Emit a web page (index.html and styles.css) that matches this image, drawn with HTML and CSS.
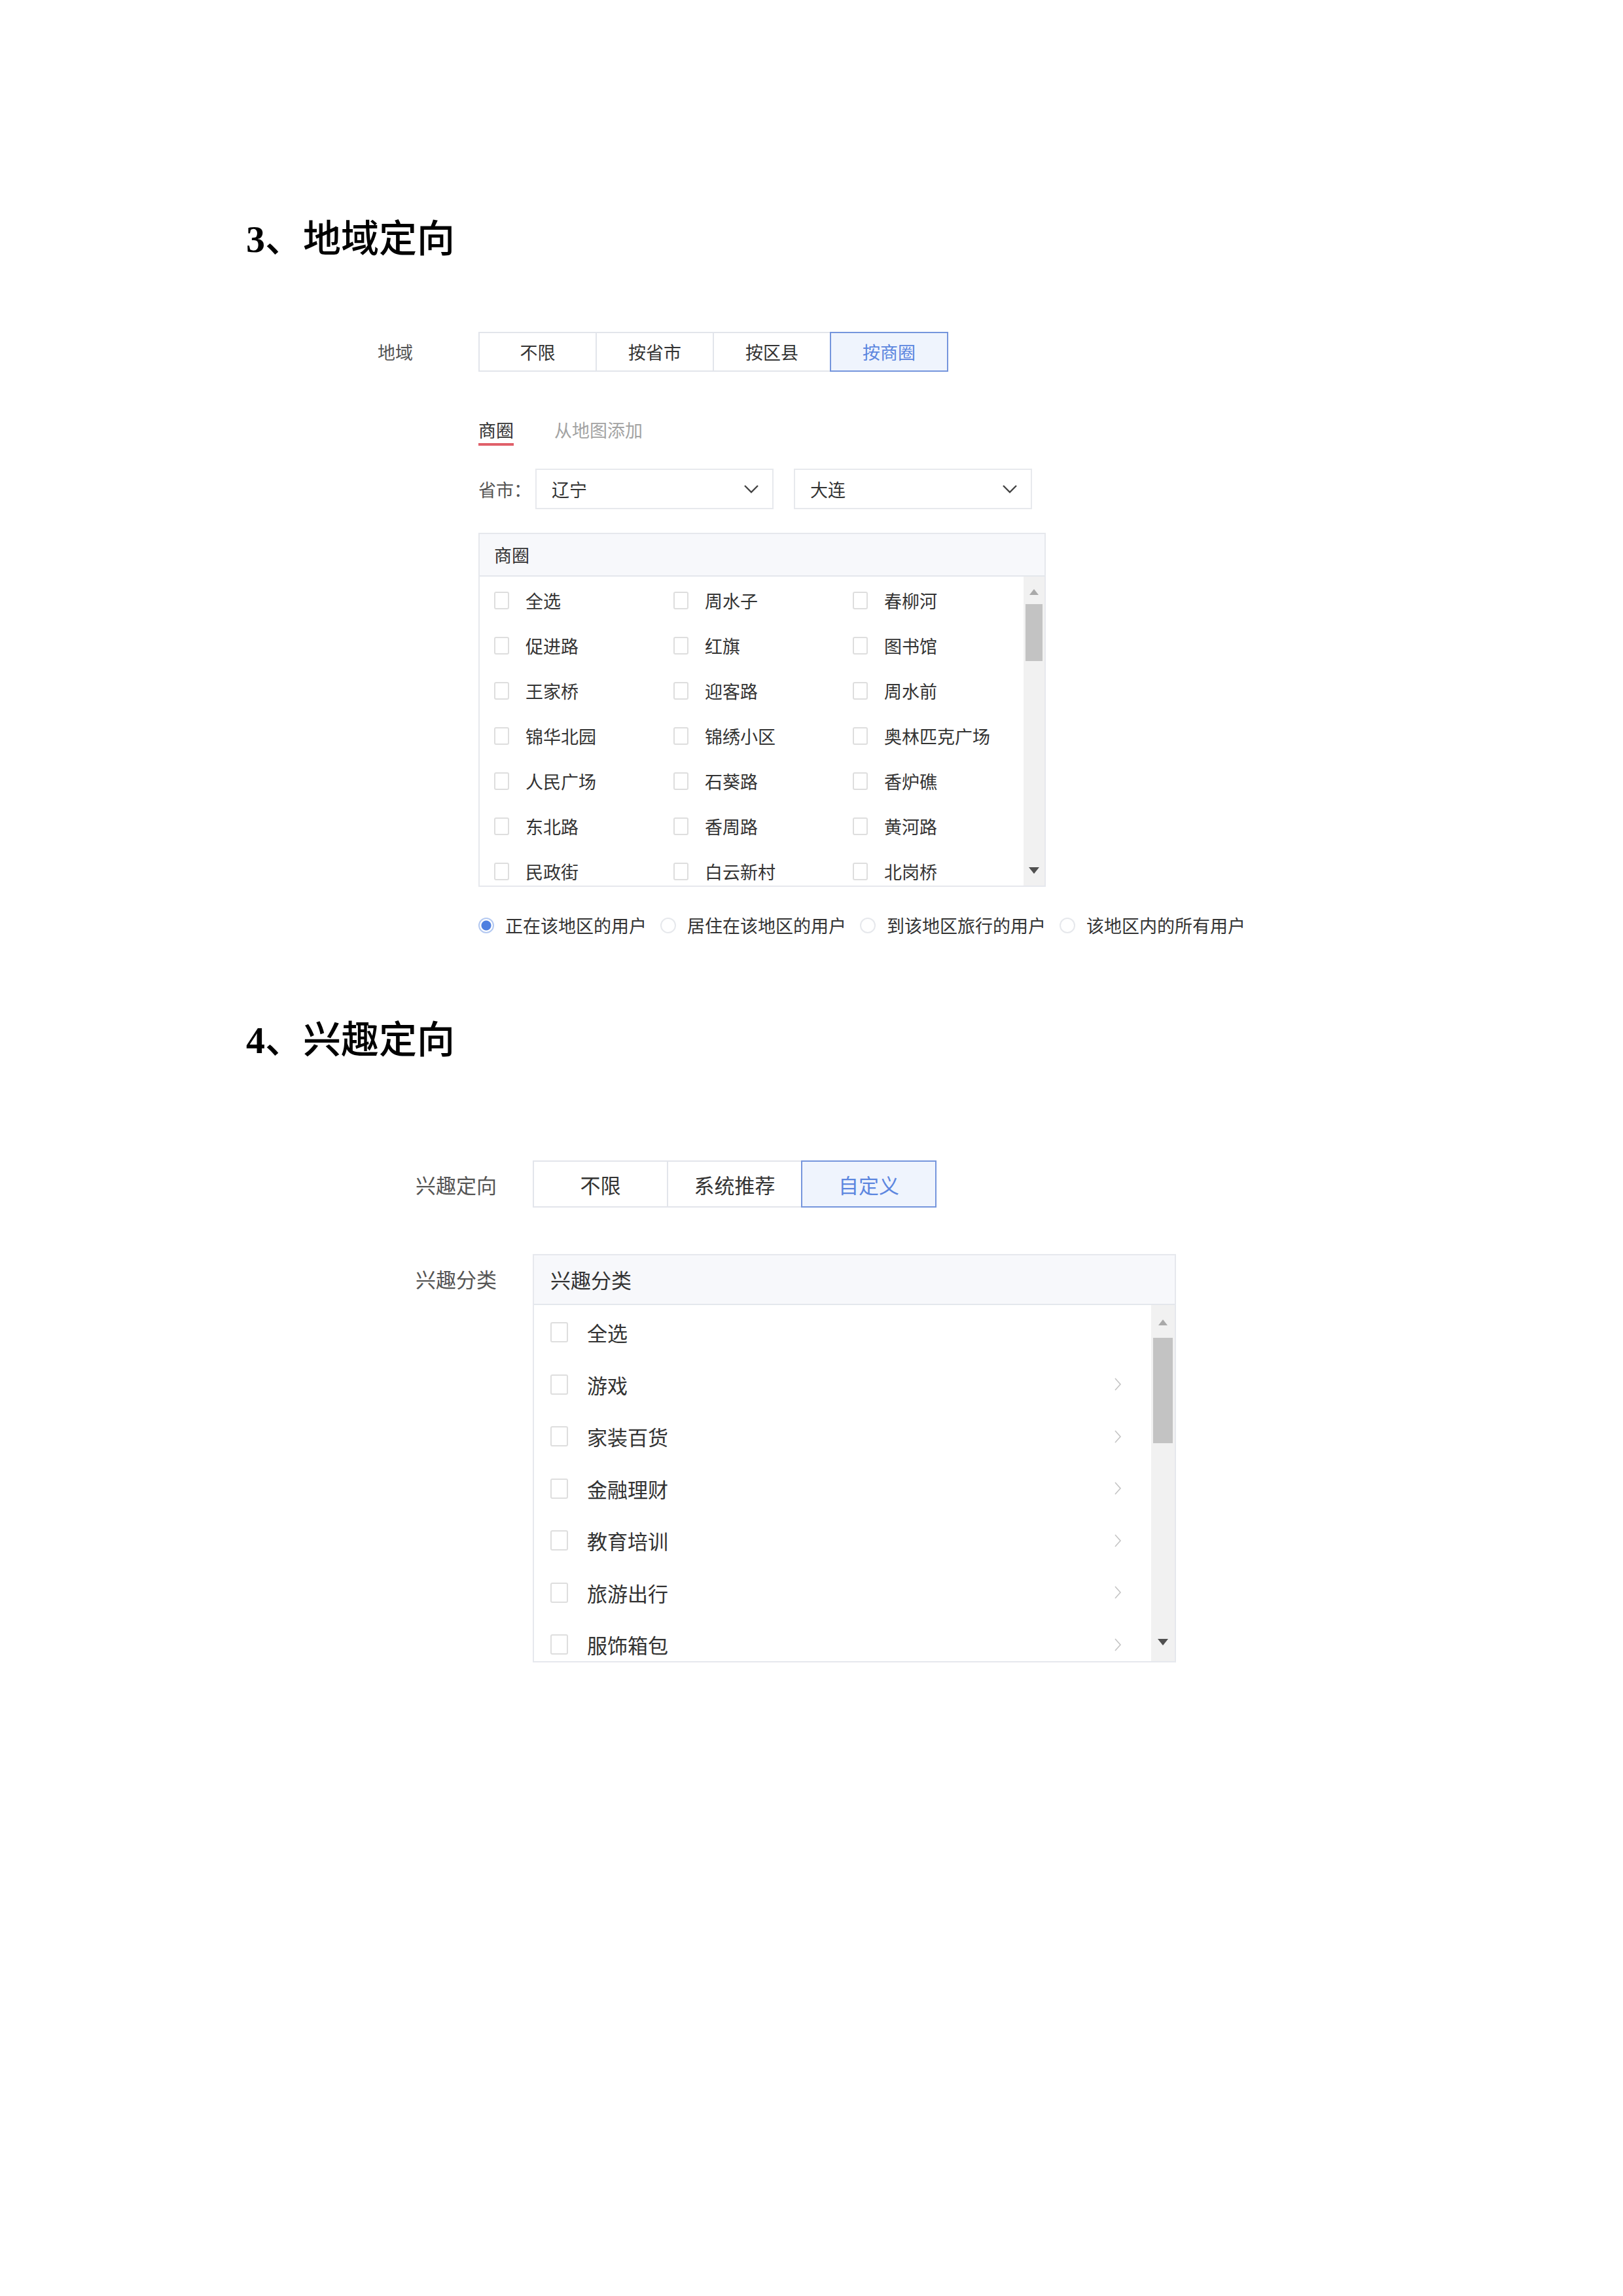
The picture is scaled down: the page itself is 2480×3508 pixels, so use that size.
FILE: index.html
```html
<!DOCTYPE html>
<html lang="zh-CN">
<head>
<meta charset="utf-8">
<title>定向设置</title>
<link rel="stylesheet" href="styles.css">
</head>
<body>
<main class="page">

  <h2 class="sec-title"><span class="num">3</span>、地域定向</h2>

  <section class="form geo">
    <div class="row">
      <div class="row-label">地域</div>
      <div class="segmented">
        <button class="seg">不限</button>
        <button class="seg">按省市</button>
        <button class="seg">按区县</button>
        <button class="seg active">按商圈</button>
      </div>
    </div>

    <div class="row tabs-row">
      <div class="row-label"></div>
      <div class="tabs">
        <span class="tab active">商圈</span>
        <span class="tab">从地图添加</span>
      </div>
    </div>

    <div class="row region-row">
      <div class="row-label"></div>
      <span class="region-label">省市：</span>
      <div class="select">
        <span>辽宁</span>
        <svg class="caret" viewBox="0 0 24 14" width="24" height="14"><path d="M2 2 L12 12 L22 2" fill="none" stroke="#444" stroke-width="2.4"/></svg>
      </div>
      <div class="select">
        <span>大连</span>
        <svg class="caret" viewBox="0 0 24 14" width="24" height="14"><path d="M2 2 L12 12 L22 2" fill="none" stroke="#444" stroke-width="2.4"/></svg>
      </div>
    </div>

    <div class="row list-row">
      <div class="row-label"></div>
      <div class="listbox area-box">
        <div class="list-head">商圈</div>
        <div class="list-body">
          <div class="list-items area-grid">
            <label class="item"><span class="check"></span>全选</label>
            <label class="item"><span class="check"></span>周水子</label>
            <label class="item"><span class="check"></span>春柳河</label>
            <label class="item"><span class="check"></span>促进路</label>
            <label class="item"><span class="check"></span>红旗</label>
            <label class="item"><span class="check"></span>图书馆</label>
            <label class="item"><span class="check"></span>王家桥</label>
            <label class="item"><span class="check"></span>迎客路</label>
            <label class="item"><span class="check"></span>周水前</label>
            <label class="item"><span class="check"></span>锦华北园</label>
            <label class="item"><span class="check"></span>锦绣小区</label>
            <label class="item"><span class="check"></span>奥林匹克广场</label>
            <label class="item"><span class="check"></span>人民广场</label>
            <label class="item"><span class="check"></span>石葵路</label>
            <label class="item"><span class="check"></span>香炉礁</label>
            <label class="item"><span class="check"></span>东北路</label>
            <label class="item"><span class="check"></span>香周路</label>
            <label class="item"><span class="check"></span>黄河路</label>
            <label class="item"><span class="check"></span>民政街</label>
            <label class="item"><span class="check"></span>白云新村</label>
            <label class="item"><span class="check"></span>北岗桥</label>
          </div>
          <div class="scrollbar">
            <span class="arrow-up"></span>
            <span class="thumb"></span>
            <span class="track-fill"></span>
            <span class="arrow-down"></span>
          </div>
        </div>
      </div>
    </div>

    <div class="row radio-row">
      <div class="row-label"></div>
      <div class="radios">
        <label class="radio-item"><span class="radio on"></span>正在该地区的用户</label>
        <label class="radio-item"><span class="radio"></span>居住在该地区的用户</label>
        <label class="radio-item"><span class="radio"></span>到该地区旅行的用户</label>
        <label class="radio-item"><span class="radio"></span>该地区内的所有用户</label>
      </div>
    </div>
  </section>

  <h2 class="sec-title sec-two"><span class="num">4</span>、兴趣定向</h2>

  <section class="form interest">
    <div class="row">
      <div class="row-label">兴趣定向</div>
      <div class="segmented">
        <button class="seg">不限</button>
        <button class="seg">系统推荐</button>
        <button class="seg active">自定义</button>
      </div>
    </div>

    <div class="row list-row top">
      <div class="row-label head-label">兴趣分类</div>
      <div class="listbox cat-box">
        <div class="list-head">兴趣分类</div>
        <div class="list-body">
          <div class="list-items cat-list">
            <label class="item"><span class="check"></span>全选</label>
            <label class="item"><span class="check"></span>游戏<svg class="next" viewBox="0 0 12 22" width="12" height="22"><path d="M2 2 L10 11 L2 20" fill="none" stroke="#c4c4c4" stroke-width="1.6"/></svg></label>
            <label class="item"><span class="check"></span>家装百货<svg class="next" viewBox="0 0 12 22" width="12" height="22"><path d="M2 2 L10 11 L2 20" fill="none" stroke="#c4c4c4" stroke-width="1.6"/></svg></label>
            <label class="item"><span class="check"></span>金融理财<svg class="next" viewBox="0 0 12 22" width="12" height="22"><path d="M2 2 L10 11 L2 20" fill="none" stroke="#c4c4c4" stroke-width="1.6"/></svg></label>
            <label class="item"><span class="check"></span>教育培训<svg class="next" viewBox="0 0 12 22" width="12" height="22"><path d="M2 2 L10 11 L2 20" fill="none" stroke="#c4c4c4" stroke-width="1.6"/></svg></label>
            <label class="item"><span class="check"></span>旅游出行<svg class="next" viewBox="0 0 12 22" width="12" height="22"><path d="M2 2 L10 11 L2 20" fill="none" stroke="#c4c4c4" stroke-width="1.6"/></svg></label>
            <label class="item"><span class="check"></span>服饰箱包<svg class="next" viewBox="0 0 12 22" width="12" height="22"><path d="M2 2 L10 11 L2 20" fill="none" stroke="#c4c4c4" stroke-width="1.6"/></svg></label>
          </div>
          <div class="scrollbar">
            <span class="arrow-up"></span>
            <span class="thumb"></span>
            <span class="track-fill"></span>
            <span class="arrow-down"></span>
          </div>
        </div>
      </div>
    </div>
  </section>

</main>
</body>
</html>
```

FILE: styles.css
```css
html, body {
  margin: 0;
  background: #fff;
}

body {
  font-family: "Noto Sans CJK SC", "Noto Sans", sans-serif;
  color: #333;
}

.page {
  width: 2480px;
  min-height: 3508px;
  box-sizing: border-box;
  padding: 334px 0 0 376px;
}

/* Section headings */
.sec-title {
  margin: 0;
  font-family: "Liberation Serif", "Noto Sans CJK SC", serif;
  font-size: 58px;
  line-height: 64px;
  font-weight: 500;
  color: #000;
}

.sec-title .num {
  font-weight: 700;
}

.sec-two {
  margin-top: 124px;
}

/* Form rows */
.row {
  display: flex;
  align-items: center;
}

.row.top {
  align-items: flex-start;
}

.row-label {
  flex: none;
  color: #555;
}

.geo {
  margin: 109px 0 0 201px;
  font-size: 27px;
}

.geo .row-label {
  width: 154px;
}

.interest {
  margin: 151px 0 0 259px;
  font-size: 31px;
}

.interest .row-label {
  width: 179px;
}

/* Segmented buttons */
.segmented {
  display: flex;
}

.seg {
  box-sizing: border-box;
  width: 181px;
  height: 61px;
  margin: 0 0 0 -2px;
  padding: 0;
  border: 2px solid #e2e5eb;
  background: #fff;
  color: #333;
  font: inherit;
}

.seg:first-child {
  margin-left: 0;
}

.seg.active {
  position: relative;
  z-index: 1;
  border-color: #7595dc;
  background: #eff4fd;
  color: #5c86df;
}

.interest .seg {
  width: 207px;
  height: 72px;
}

/* Tabs */
.tabs-row {
  margin-top: 69px;
}

.tabs {
  display: flex;
  gap: 62px;
}

.tab {
  line-height: 40px;
  border-bottom: 4px solid transparent;
  color: #a3a3a3;
}

.tab.active {
  color: #333;
  border-bottom-color: #e0606a;
}

/* Province / city selects */
.region-row {
  margin-top: 35px;
}

.region-label {
  color: #555;
  width: 87px;
  flex: none;
}

.select {
  box-sizing: border-box;
  width: 364px;
  height: 62px;
  margin-right: 31px;
  padding: 0 20px 0 23px;
  border: 2px solid #e7e9ed;
  display: flex;
  align-items: center;
  justify-content: space-between;
  color: #333;
}

.caret {
  display: block;
}

/* Scrolling list boxes */
.list-row {
  margin-top: 36px;
}

.interest .list-row {
  margin-top: 71px;
}

.head-label {
  line-height: 76px;
}

.listbox {
  box-sizing: border-box;
  border: 2px solid #e6e8ed;
  display: flex;
  flex-direction: column;
}

.area-box {
  width: 867px;
  height: 541px;
}

.cat-box {
  width: 983px;
  height: 624px;
}

.list-head {
  flex: none;
  background: #f7f8fb;
  border-bottom: 2px solid #e4e7ec;
  color: #333;
}

.area-box .list-head {
  height: 63px;
  line-height: 63px;
  padding-left: 22px;
}

.cat-box .list-head {
  height: 74px;
  line-height: 74px;
  padding-left: 25px;
}

.list-body {
  flex: 1;
  min-height: 0;
  display: flex;
  overflow: hidden;
}

.list-items {
  flex: 1;
  min-width: 0;
  overflow: hidden;
}

.area-grid {
  display: grid;
  grid-template-columns: repeat(3, 274px);
  grid-auto-rows: 69px;
  padding: 2px 0 0 22px;
}

.cat-list {
  display: flex;
  flex-direction: column;
  padding: 2px 0 0 25px;
}

.item {
  display: flex;
  align-items: center;
  color: #333;
  white-space: nowrap;
}

.area-grid .item {
  gap: 25px;
}

.cat-list .item {
  flex: none;
  height: 79.5px;
  gap: 29px;
  padding-right: 45px;
}

.check {
  flex: none;
  box-sizing: border-box;
  width: 23px;
  height: 27px;
  border: 2px solid #dedede;
  border-radius: 3px;
  background: #fff;
}

.cat-list .check {
  width: 27px;
  height: 31px;
}

.next {
  margin-left: auto;
  display: block;
}

/* Scrollbar */
.scrollbar {
  flex: none;
  width: 32px;
  background: #f1f1f1;
  display: flex;
  flex-direction: column;
  align-items: center;
}

.cat-box .scrollbar {
  width: 36px;
}

.arrow-up {
  margin-top: 19px;
  width: 0;
  height: 0;
  border-left: 7px solid transparent;
  border-right: 7px solid transparent;
  border-bottom: 9px solid #a9a9a9;
}

.thumb {
  margin-top: 14px;
  width: 26px;
  height: 87px;
  background: #c3c3c3;
}

.cat-box .arrow-up {
  margin-top: 22px;
}

.cat-box .thumb {
  margin-top: 19px;
  width: 30px;
  height: 161px;
}

.track-fill {
  flex: 1;
}

.arrow-down {
  margin-bottom: 18px;
  width: 0;
  height: 0;
  border-left: 8px solid transparent;
  border-right: 8px solid transparent;
  border-top: 10px solid #505050;
}

.cat-box .arrow-down {
  margin-bottom: 24px;
}

/* Radio options */
.radio-row {
  margin-top: 39px;
}

.radios {
  display: flex;
  gap: 21px;
}

.radio-item {
  display: flex;
  align-items: center;
  gap: 17px;
  line-height: 40px;
  color: #333;
  white-space: nowrap;
}

.radio {
  flex: none;
  box-sizing: border-box;
  width: 24px;
  height: 24px;
  border-radius: 50%;
  border: 2px solid #e6e8ec;
  background: #fff;
}

.radio.on {
  border-color: #b4c9f1;
  background: radial-gradient(circle, #4f80e0 0 7px, #fff 8px);
}
```
